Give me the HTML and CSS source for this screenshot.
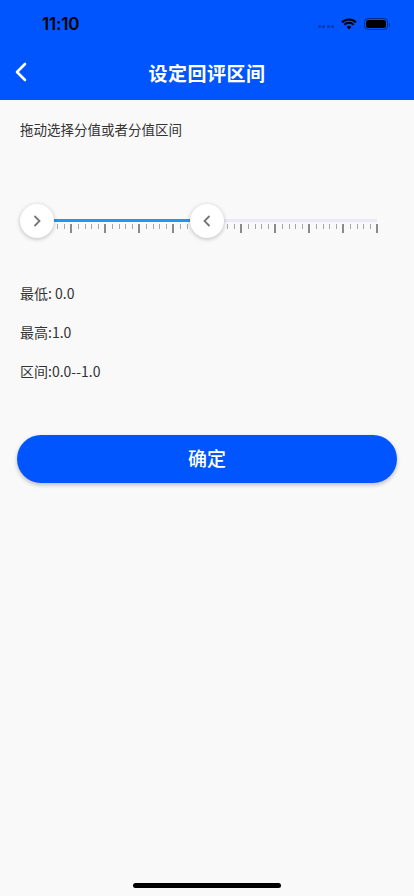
FILE: index.html
```html
<!DOCTYPE html>
<html lang="zh-CN">
<head>
    <meta charset="UTF-8">
    <meta name="viewport" content="width=device-width, initial-scale=1.0">
    <title>设定回评区间</title>
    <link rel="stylesheet" href="styles.css">
</head>
<body>

<header class="top">
    <div class="status">
        <span class="time">11:10</span>
        <div class="status-icons">
            <span class="dots"><i></i><i></i><i></i><i></i></span>
            <svg class="wifi" width="16" height="12" viewBox="0 0 16 12">
                <path d="M8 11.5 L5.6 9 A3.4 3.4 0 0 1 10.4 9 Z" fill="#000"/>
                <path d="M3.3 6.8 A6.6 6.6 0 0 1 12.7 6.8" stroke="#000" stroke-width="2" fill="none"/>
                <path d="M1 4.3 A10 10 0 0 1 15 4.3" stroke="#000" stroke-width="2" fill="none"/>
            </svg>
            <span class="battery"><span class="battery-level"></span></span>
        </div>
    </div>
    <nav class="navbar">
        <svg class="back" width="14" height="20" viewBox="0 0 14 20">
            <path d="M11 2 L3 10 L11 18" stroke="#fff" stroke-width="2.6" fill="none" stroke-linecap="round" stroke-linejoin="round"/>
        </svg>
        <h1 class="title">设定回评区间</h1>
    </nav>
</header>

<main class="page">
    <p class="hint">拖动选择分值或者分值区间</p>

    <div class="slider">
        <div class="rail">
            <div class="track">
                <div class="fill" style="width: 50%"></div>
            </div>
            <div class="ticks"></div>
            <span class="thumb" style="left: 0%">
                <svg width="8" height="12" viewBox="0 0 8 12"><path d="M2 1.5 L6.5 6 L2 10.5" stroke="#757575" stroke-width="1.8" fill="none" stroke-linecap="round"/></svg>
            </span>
            <span class="thumb" style="left: 50%">
                <svg width="8" height="12" viewBox="0 0 8 12"><path d="M6 1.5 L1.5 6 L6 10.5" stroke="#757575" stroke-width="1.8" fill="none" stroke-linecap="round"/></svg>
            </span>
        </div>
    </div>

    <div class="values">
        <p>最低: 0.0</p>
        <p>最高:1.0</p>
        <p>区间:0.0--1.0</p>
    </div>

    <button class="confirm" type="button">确定</button>
</main>

<div class="home-bar"></div>

</body>
</html>
```

FILE: styles.css
```css
* {
    box-sizing: border-box;
}
body {
    margin: 0;
    min-height: 896px;
    display: flex;
    flex-direction: column;
    background-color: #f9f9f9;
    font-family: "Noto Sans CJK SC", "Noto Sans", sans-serif;
    color: #333;
}
p {
    margin: 0;
}

/* header */
.top {
    background-color: #0055ff;
}
.status {
    height: 44px;
    display: flex;
    align-items: center;
    justify-content: space-between;
    padding: 4px 26px 0 42px;
}
.time {
    font-family: Inter, "Liberation Sans", sans-serif;
    font-size: 17px;
    font-weight: 600;
    color: #000;
    letter-spacing: -0.2px;
}
.status-icons {
    display: flex;
    align-items: center;
    gap: 7px;
}
.dots {
    display: flex;
    gap: 1.5px;
    margin-top: 5px;
}
.dots i {
    width: 3px;
    height: 3px;
    border-radius: 50%;
    background: rgba(0, 0, 0, 0.35);
}
.battery {
    width: 24px;
    height: 12px;
    border: 1px solid rgba(0, 0, 0, 0.45);
    border-radius: 3.5px;
    padding: 1px;
    position: relative;
}
.battery::after {
    content: "";
    position: absolute;
    right: -3px;
    top: 3.5px;
    width: 1.5px;
    height: 4px;
    border-radius: 0 1px 1px 0;
    background: rgba(0, 0, 0, 0.45);
}
.battery-level {
    display: block;
    height: 100%;
    background: #000;
    border-radius: 2px;
}
.navbar {
    height: 56px;
    display: flex;
    align-items: center;
    justify-content: center;
    position: relative;
}
.back {
    position: absolute;
    left: 14px;
    top: 18px;
}
.title {
    margin: 0;
    color: #fff;
    font-size: 19px;
    font-weight: 600;
    letter-spacing: 0.5px;
}

/* content */
.page {
    padding: 0 20px;
}
.hint {
    margin-top: 19px;
    font-size: 13.5px;
    line-height: 20px;
}

.slider {
    margin-top: 65px;
}
.rail {
    position: relative;
    margin: 0 17px;
    height: 34px;
    padding-top: 15px;
}
.track {
    height: 3px;
    background: #ebe8fa;
}
.fill {
    height: 100%;
    background: #2196f3;
}
.ticks {
    margin: 2px -1px 0;
    height: 9px;
    background:
        repeating-linear-gradient(to right, #8a8a8a 0 2px, transparent 2px 34px) 0 0 / 100% 9px no-repeat,
        repeating-linear-gradient(to right, #a6a6a6 0 1px, transparent 1px 6.8px) 0.5px 0 / 100% 5px no-repeat;
    width: 343px;
}
.thumb {
    position: absolute;
    top: 0;
    width: 34px;
    height: 34px;
    margin-left: -17px;
    border-radius: 50%;
    background: #fff;
    box-shadow: 0 1px 4px rgba(0, 0, 0, 0.25);
    display: flex;
    align-items: center;
    justify-content: center;
}

.values {
    margin-top: 45px;
    display: flex;
    flex-direction: column;
    gap: 19px;
    font-size: 14px;
    line-height: 20px;
}

.confirm {
    display: block;
    width: calc(100% + 6px);
    margin: 54px -3px 0;
    height: 48px;
    padding: 0 0 3px;
    border: none;
    border-radius: 24px;
    background-color: #0055ff;
    color: #fff;
    font-family: inherit;
    font-size: 19px;
    font-weight: 500;
    box-shadow: 0 2px 4px rgba(0, 0, 0, 0.25);
}

.home-bar {
    margin: auto auto 8px;
    width: 148px;
    height: 5px;
    border-radius: 3px;
    background: #000;
}
```
